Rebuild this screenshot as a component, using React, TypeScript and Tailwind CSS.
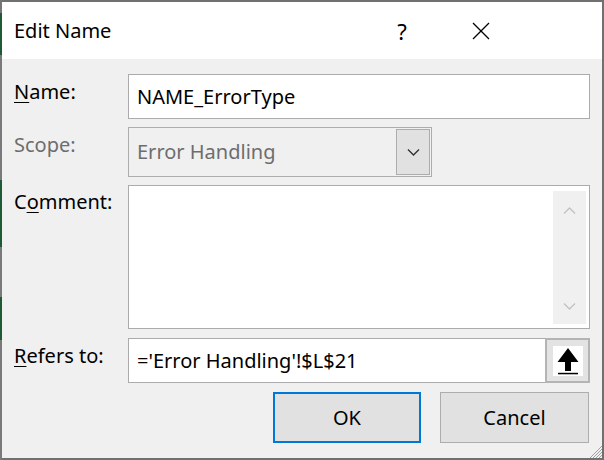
import React from "react";

const font = { fontFamily: '"Noto Sans", "Open Sans", sans-serif' };

function Chevron({ up, className }: { up?: boolean; className?: string }) {
  return (
    <svg width="13" height="7" viewBox="0 0 13 7" className={className}>
      <polyline
        points={up ? "1,6.5 6.5,1 12,6.5" : "1,0.5 6.5,6 12,0.5"}
        fill="none"
        stroke="currentColor"
        strokeWidth="1.4"
      />
    </svg>
  );
}

export default function App() {
  return (
    <div className="w-[604px] h-[460px] flex overflow-hidden text-black" style={font}>
      {/* left strip: background app seen through */}
      <div className="w-[2px] h-full flex flex-col">
        <div className="h-[13px] bg-[#767676]" />
        <div className="h-[42px] bg-[#1f5a36]" />
        <div className="h-[125px] bg-[#7a7a7a]" />
        <div className="h-[67px] bg-[#1f5a36]" />
        <div className="h-[50px] bg-[#7a7a7a]" />
        <div className="h-[43px] bg-[#1f5a36]" />
        <div className="flex-1 bg-[#7a7a7a]" />
      </div>
      <div className="flex-1 relative flex flex-col border-t-2 border-r-2 border-b-2 border-[#707070]">
        {/* title bar */}
        <div className="h-[57px] bg-white flex items-center">
          <div className="pl-[12px] text-[20px] leading-none flex-1">Edit Name</div>
          <div className="w-[20px] text-[22px] leading-none text-center mr-[60px]">?</div>
          <svg width="18" height="18" viewBox="0 0 18 18" className="mr-[112px]">
            <line x1="1" y1="1" x2="17" y2="17" stroke="#000" strokeWidth="1.3" />
            <line x1="17" y1="1" x2="1" y2="17" stroke="#000" strokeWidth="1.3" />
          </svg>
        </div>
        {/* body */}
        <div className="flex-1 bg-[#f0f0f0] flex flex-col pr-[12px] pl-[12px]">
          {/* Name */}
          <div className="flex mt-[15px] h-[45px]">
            <div className="w-[114px] text-[20px] leading-[28px] pt-[4px]">
              <span className="underline underline-offset-[3px] decoration-1">N</span>ame:
            </div>
            <div className="flex-1 bg-white border border-[#ababab] flex items-center pl-[8px] text-[20px]">
              NAME_ErrorType
            </div>
          </div>
          {/* Scope */}
          <div className="flex mt-[8px] h-[50px]">
            <div className="w-[114px] text-[20px] leading-[28px] pt-[4px] text-[#6d6d6d]">Scope:</div>
            <div className="w-[304px] border border-[#adadad] flex p-[1px]">
              <div className="flex-1 flex items-center pl-[7px] text-[20px] text-[#6d6d6d]">Error Handling</div>
              <div className="w-[34px] bg-[#e1e1e1] border border-[#adadad] flex items-center justify-center text-[#333]">
                <Chevron />
              </div>
            </div>
          </div>
          {/* Comment */}
          <div className="flex mt-[8px] h-[144px]">
            <div className="w-[114px] text-[20px] leading-[28px] pt-[3px]">
              C<span className="underline underline-offset-[3px] decoration-1">o</span>mment:
            </div>
            <div className="flex-1 bg-white border border-[#ababab] flex justify-end pt-[5px] pb-[4px] pr-[3px]">
              <div className="w-[33px] bg-[#f0f0f0] flex flex-col items-center justify-between pt-[16px] pb-[14px] text-[#c2c2c2]">
                <Chevron up />
                <Chevron />
              </div>
            </div>
          </div>
          {/* Refers to */}
          <div className="flex mt-[9px] h-[45px]">
            <div className="w-[114px] text-[20px] leading-[28px] pt-[4px]">
              <span className="underline underline-offset-[3px] decoration-1">R</span>efers to:
            </div>
            <div className="flex-1 bg-white border border-[#ababab] flex items-center pl-[8px] text-[20px]">
              ='Error Handling'!$L$21
            </div>
            <div className="w-[45px] -ml-[1px] bg-[#e3e3e3] border-2 border-[#b4b4b4] flex items-center justify-center">
              <div className="w-[30px] h-[30px] bg-white">
                <svg width="30" height="30" viewBox="0 0 30 30">
                  <polygon points="15,2 4.5,16 12,16 12,25 18,25 18,16 25.5,16" fill="#000" />
                  <rect x="5" y="26.8" width="20" height="1.5" fill="#000" />
                </svg>
              </div>
            </div>
          </div>
          {/* buttons */}
          <div className="flex justify-end mt-[9px] h-[51px] pr-[1px] gap-[19px]">
            <div className="w-[148px] bg-[#e1e1e1] border-2 border-[#0078d7] flex items-center justify-center text-[20px]">
              OK
            </div>
            <div className="w-[149px] bg-[#e1e1e1] border border-[#adadad] flex items-center justify-center text-[20px]">
              Cancel
            </div>
          </div>
        </div>
        {/* resize grip */}
        <svg width="14" height="14" viewBox="0 0 14 14" className="absolute right-0 bottom-0">
          <line x1="14" y1="2" x2="2" y2="14" stroke="#a0a0a0" strokeWidth="1" />
          <line x1="14" y1="5" x2="5" y2="14" stroke="#a0a0a0" strokeWidth="1" />
          <line x1="14" y1="8" x2="8" y2="14" stroke="#a0a0a0" strokeWidth="1" />
          <line x1="14" y1="11" x2="11" y2="14" stroke="#a0a0a0" strokeWidth="1" />
        </svg>
      </div>
    </div>
  );
}
